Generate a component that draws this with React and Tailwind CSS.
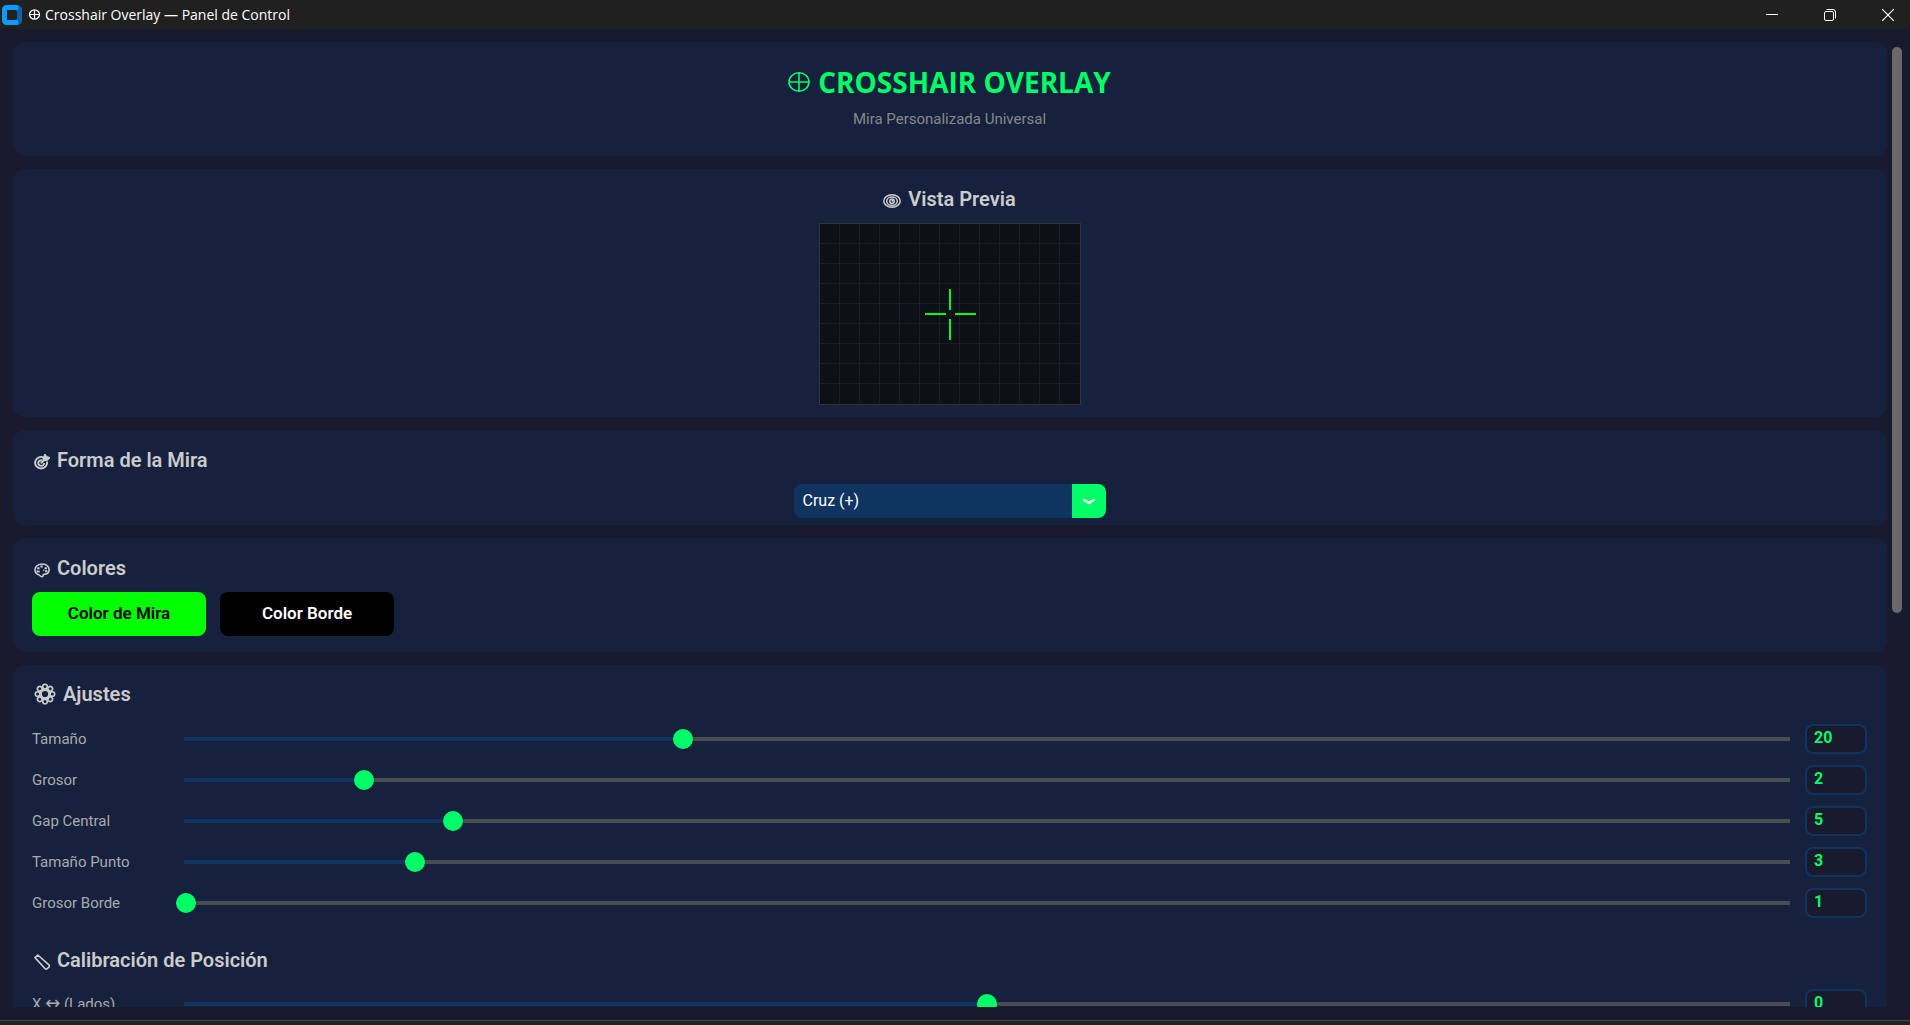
import { useState } from 'react'

const SHAPES = ['Cruz (+)']

const AJUSTES = [
  { id: 'size', label: 'Tamaño', min: 2, max: 60, value: 20 },
  { id: 'thickness', label: 'Grosor', min: 1, max: 10, value: 2 },
  { id: 'gap', label: 'Gap Central', min: 0, max: 30, value: 5 },
  { id: 'dot', label: 'Tamaño Punto', min: 1, max: 15, value: 3 },
  { id: 'outline', label: 'Grosor Borde', min: 1, max: 5, value: 1 },
]

const POSICION = [
  {
    id: 'offsetX',
    label: <>X <span className="font-['DejaVu_Sans',sans-serif] text-lg leading-none">↔</span> (Lados)</>,
    min: -500,
    max: 500,
    value: 0,
  },
]

function CrosshairIcon({ className }) {
  return (
    <svg viewBox="0 0 22 22" className={className} fill="none" stroke="currentColor" strokeWidth="1.6" aria-hidden="true">
      <ellipse cx="11" cy="11" rx="10" ry="9.2" />
      <path d="M11 2v18M1 11h20" />
    </svg>
  )
}

function EyeIcon() {
  return (
    <svg viewBox="0 0 18 14" className="w-[18px] h-[14px]" fill="none" stroke="currentColor" strokeWidth="1.5" aria-hidden="true">
      <ellipse cx="9" cy="7" rx="8.2" ry="6.2" />
      <ellipse cx="9" cy="7.2" rx="5.3" ry="4.2" />
      <circle cx="9" cy="7.2" r="2.2" />
      <circle cx="9.4" cy="6.8" r="1" fill="currentColor" stroke="none" />
    </svg>
  )
}

function TargetIcon() {
  return (
    <svg viewBox="0 0 16 16" className="w-4 h-4" fill="none" stroke="currentColor" strokeWidth="1.9" aria-hidden="true">
      <path d="M9.5 3.4A6 5.8 0 1 0 13 7.6" />
      <path d="M8.2 6.4A3 2.800 0 1 0 10.200 9" />
      <path d="M6.800 9.200l5-4.400" />
      <path d="M9.400 4.800L11 .8l1.400 2.200 3 .8-3 2.600z" fill="currentColor" />
    </svg>
  )
}

function PaletteIcon() {
  return (
    <svg viewBox="0 0 16 16" className="w-4 h-4" fill="none" stroke="currentColor" strokeWidth="1.600" aria-hidden="true">
      <path d="M3.400 12.200C.6 10.700.2 6.600 2.400 4.200 5 1.400 11 1.300 13.600 4c2.200 2.400 1.900 6-.4 7.600-1.500 1-2.600.2-3.700.9-.9.7.1 2-1.300 2.300-1.600.3-1.700-1.900-4.800-2.600z" />
      <path d="M2.600 9.600h3M3.200 6.200h2.400M6.400 4.400h2.400" strokeWidth="2" />
      <circle cx="11.800" cy="6.200" r="1.200" fill="currentColor" stroke="none" />
      <circle cx="12.200" cy="9.200" r="1.200" fill="currentColor" stroke="none" />
      <circle cx="9.800" cy="8.200" r=".8" fill="currentColor" stroke="none" />
    </svg>
  )
}

function GearIcon() {
  const petals = [0, 45, 90, 135, 180, 225, 270, 315]
  return (
    <svg viewBox="0 0 22 22" className="w-[22px] h-[22px]" fill="none" stroke="currentColor" strokeWidth="1.600" aria-hidden="true">
      <circle cx="11" cy="11" r="5.200" />
      <circle cx="11" cy="11" r="3.900" />
      {petals.map((a) => (
        <circle key={a} cx="11" cy="3.600" r="2.300" transform={`rotate(${a} 11 11)`} />
      ))}
    </svg>
  )
}

function RulerIcon() {
  return (
    <svg viewBox="0 0 16 16" className="w-4 h-4" fill="none" stroke="currentColor" strokeWidth="1.600" strokeLinejoin="round" aria-hidden="true">
      <path d="M1 3.600L3.800 1l11.400 10.200v1.600L12.800 15h-1.400z" />
    </svg>
  )
}

function Card({ className = '', children }) {
  return <section className={`bg-[#16213e] rounded-xl pl-[19px] pr-5 ${className}`}>{children}</section>
}

function SectionTitle({ icon, children }) {
  return (
    <h2 className="flex items-center gap-[7px] px-0.5 h-7 text-xl leading-7 font-semibold text-[#cccccc]">
      {icon}
      {children}
    </h2>
  )
}

function Preview() {
  const cols = Array.from({ length: 12 }, (_, i) => 20 + i * 20)
  const rows = Array.from({ length: 8 }, (_, i) => 20 + i * 20)
  return (
    <svg width="262" height="182" shapeRendering="crispEdges" role="img" aria-label="Vista Previa">
      <rect x="0.5" y="0.5" width="261" height="181" fill="#0d1117" stroke="#333333" />
      <g fill="#1a1e26">
        {cols.map((x) => <rect key={x} x={x} y="1" width="1" height="179" />)}
        {rows.map((y) => <rect key={y} x="1" y={y} width="259" height="1" />)}
      </g>
      <g fill="#00ff00">
        <rect x="130" y="66" width="2" height="21" />
        <rect x="130" y="96" width="2" height="21" />
        <rect x="106" y="90" width="21" height="2" />
        <rect x="136" y="90" width="21" height="2" />
      </g>
    </svg>
  )
}

function SliderRow({ item, value, onChange }) {
  const pct = ((value - item.min) / (item.max - item.min)) * 100
  return (
    <div className="flex items-center h-[30px]">
      <label id={`${item.id}-label`} htmlFor={item.id} className="w-36 shrink-0 text-[15px] leading-5 text-[#aaaaaa]">{item.label}</label>
      <input
        id={item.id}
        type="range"
        min={item.min}
        max={item.max}
        value={value}
        onChange={(e) => onChange(item.id, Number(e.target.value))}
        style={{ backgroundImage: `linear-gradient(to right, #0f3460 ${pct}%, #4a4d50 ${pct}%)` }}
        className="flex-1 min-w-0 h-5 appearance-none bg-transparent bg-[length:calc(100%-16px)_4px] bg-center bg-no-repeat [&::-webkit-slider-thumb]:appearance-none [&::-webkit-slider-thumb]:w-5 [&::-webkit-slider-thumb]:h-5 [&::-webkit-slider-thumb]:rounded-full [&::-webkit-slider-thumb]:bg-[#00ff66]"
      />
      <input
        type="text"
        aria-labelledby={`${item.id}-label`}
        value={value}
        onChange={(e) => onChange(item.id, Number(e.target.value) || 0)}
        className="ml-[7px] w-[62px] h-[30px] px-[7px] pb-1 rounded-lg border-2 border-[#0f3460] bg-[#1a1a2e] text-base leading-5 font-bold text-[#00ff66] outline-none"
      />
    </div>
  )
}

export default function App() {
  const [shape, setShape] = useState(SHAPES[0])
  const [values, setValues] = useState(() =>
    Object.fromEntries([...AJUSTES, ...POSICION].map((s) => [s.id, s.value]))
  )
  const update = (id, v) => setValues((prev) => ({ ...prev, [id]: v }))

  return (
    <div className="h-screen flex flex-col bg-[#1a1a2e] font-['Roboto',sans-serif] overflow-hidden">
      <header className="flex items-center justify-between h-[29px] shrink-0 bg-[#202020] text-white">
        <div className="flex items-center pl-0.5">
          <svg viewBox="0 0 20 20" className="w-5 h-5" aria-hidden="true">
            <path d="M14 0h1.500A4.500 4.500 0 0 1 20 4.500v11a4.500 4.500 0 0 1-4.500 4.500H14z" fill="#1060a8" />
            <path d="M4.500 0H15a1.500 2.500 0 0 1 0 5H5v10h10a1.500 2.500 0 0 1 0 5H4.500A4.500 4.500 0 0 1 0 15.500v-11A4.500 4.500 0 0 1 4.500 0z" fill="#0a9bff" />
            <path d="M5 6.500L6.500 5h7L15 6.500v7L13.500 15h-7L5 13.500z" fill="#202020" />
          </svg>
          <CrosshairIcon className="ml-[7px] mr-[5px] w-[11px] h-[11px] stroke-[2.4]" />
          <span className="text-sm leading-5 font-['Open_Sans',sans-serif]">Crosshair Overlay — Panel de Control</span>
        </div>
        <div className="flex gap-3.5">
          <button type="button" aria-label="Minimizar" className="w-11 h-[29px] flex items-center justify-center">
            <svg width="12" height="12" shapeRendering="crispEdges"><rect y="5" width="12" height="1" fill="#fff" /></svg>
          </button>
          <button type="button" aria-label="Restaurar" className="w-11 h-[29px] flex items-center justify-center">
            <svg width="12" height="12" fill="none" stroke="#fff">
              <rect x="0.5" y="2.500" width="9" height="9" rx="1.500" />
              <path d="M2.500 .5h6.500a2.500 2.500 0 0 1 2.500 2.500v6.500" />
            </svg>
          </button>
          <button type="button" aria-label="Cerrar" className="w-11 h-[29px] flex items-center justify-center">
            <svg width="12" height="12" stroke="#fff" strokeWidth="1.200"><path d="M0 0l12 12M12 0L0 12" /></svg>
          </button>
        </div>
      </header>

      <div className="flex-1 min-h-0 flex py-[13px] pl-[13px] pr-2">
        <main className="flex-1 min-w-0 flex flex-col gap-[13px] overflow-y-auto [scrollbar-width:none] *:shrink-0">
          <Card className="pt-[22px] pb-[27px] flex flex-col items-center">
            <h1 className="flex items-center gap-2 text-[28px] leading-9 font-bold text-[#00ff66] font-['Open_Sans',sans-serif]">
              <CrosshairIcon className="w-[22px] h-[22px]" />
              CROSSHAIR OVERLAY
            </h1>
            <p className="mt-[9px] text-[15px] leading-5 text-[#888888]">Mira Personalizada Universal</p>
          </Card>

          <Card className="pt-4 pb-3 flex flex-col items-center">
            <SectionTitle icon={<span className="pt-1"><EyeIcon /></span>}>Vista Previa</SectionTitle>
            <div className="mt-2.5"><Preview /></div>
          </Card>

          <Card className="pt-4 pb-[7px]">
            <SectionTitle icon={<span className="pt-1"><TargetIcon /></span>}>Forma de la Mira</SectionTitle>
            <div className="relative mt-2.5 mx-auto w-[312px] h-[34px]">
              <select
                aria-label="Forma de la Mira"
                value={shape}
                onChange={(e) => setShape(e.target.value)}
                className="w-full h-full appearance-none rounded-lg bg-[#0f3460] pl-[9px] pr-10 text-base leading-5 text-white"
              >
                {SHAPES.map((s) => <option key={s}>{s}</option>)}
              </select>
              <span className="absolute right-0 top-0 w-[34px] h-[34px] rounded-r-lg bg-[#00ff66] flex items-center justify-center pointer-events-none">
                <svg width="12" height="7" viewBox="0 0 12 7" fill="none" stroke="#fff" strokeWidth="2.400" strokeLinecap="round" strokeLinejoin="round">
                  <path d="M1.300 2L6 5l4.700-3" />
                </svg>
              </span>
            </div>
          </Card>

          <Card className="pt-4 pb-4">
            <SectionTitle icon={<span className="pt-1"><PaletteIcon /></span>}>Colores</SectionTitle>
            <div className="mt-2.5 flex gap-3.5">
              <button type="button" className="w-[174px] h-11 pb-0.5 rounded-lg bg-[#00ff00] text-black text-[17px] leading-5 font-semibold">Color de Mira</button>
              <button type="button" className="w-[174px] h-11 pb-0.5 rounded-lg bg-black text-white text-[17px] leading-5 font-semibold">Color Borde</button>
            </div>
          </Card>

          <Card className="pt-[15px] pb-4">
            <SectionTitle icon={<GearIcon />}>Ajustes</SectionTitle>
            <div className="mt-4 flex flex-col gap-[11px]">
              {AJUSTES.map((s) => <SliderRow key={s.id} item={s} value={values[s.id]} onChange={update} />)}
            </div>
            <div className="mt-7">
              <SectionTitle icon={<span className="pt-1"><RulerIcon /></span>}>Calibración de Posición</SectionTitle>
            </div>
            <div className="mt-[15px] flex flex-col gap-[11px]">
              {POSICION.map((s) => <SliderRow key={s.id} item={s} value={values[s.id]} onChange={update} />)}
            </div>
          </Card>
        </main>
        <div className="ml-[5px] pt-[5px] w-2.5 shrink-0">
          <div className="w-full h-[59%] rounded-full bg-[#696969]" />
        </div>
      </div>

      <footer className="h-[5px] shrink-0 border-t border-[#4a4a4a] bg-[#20231f]" />
    </div>
  )
}
